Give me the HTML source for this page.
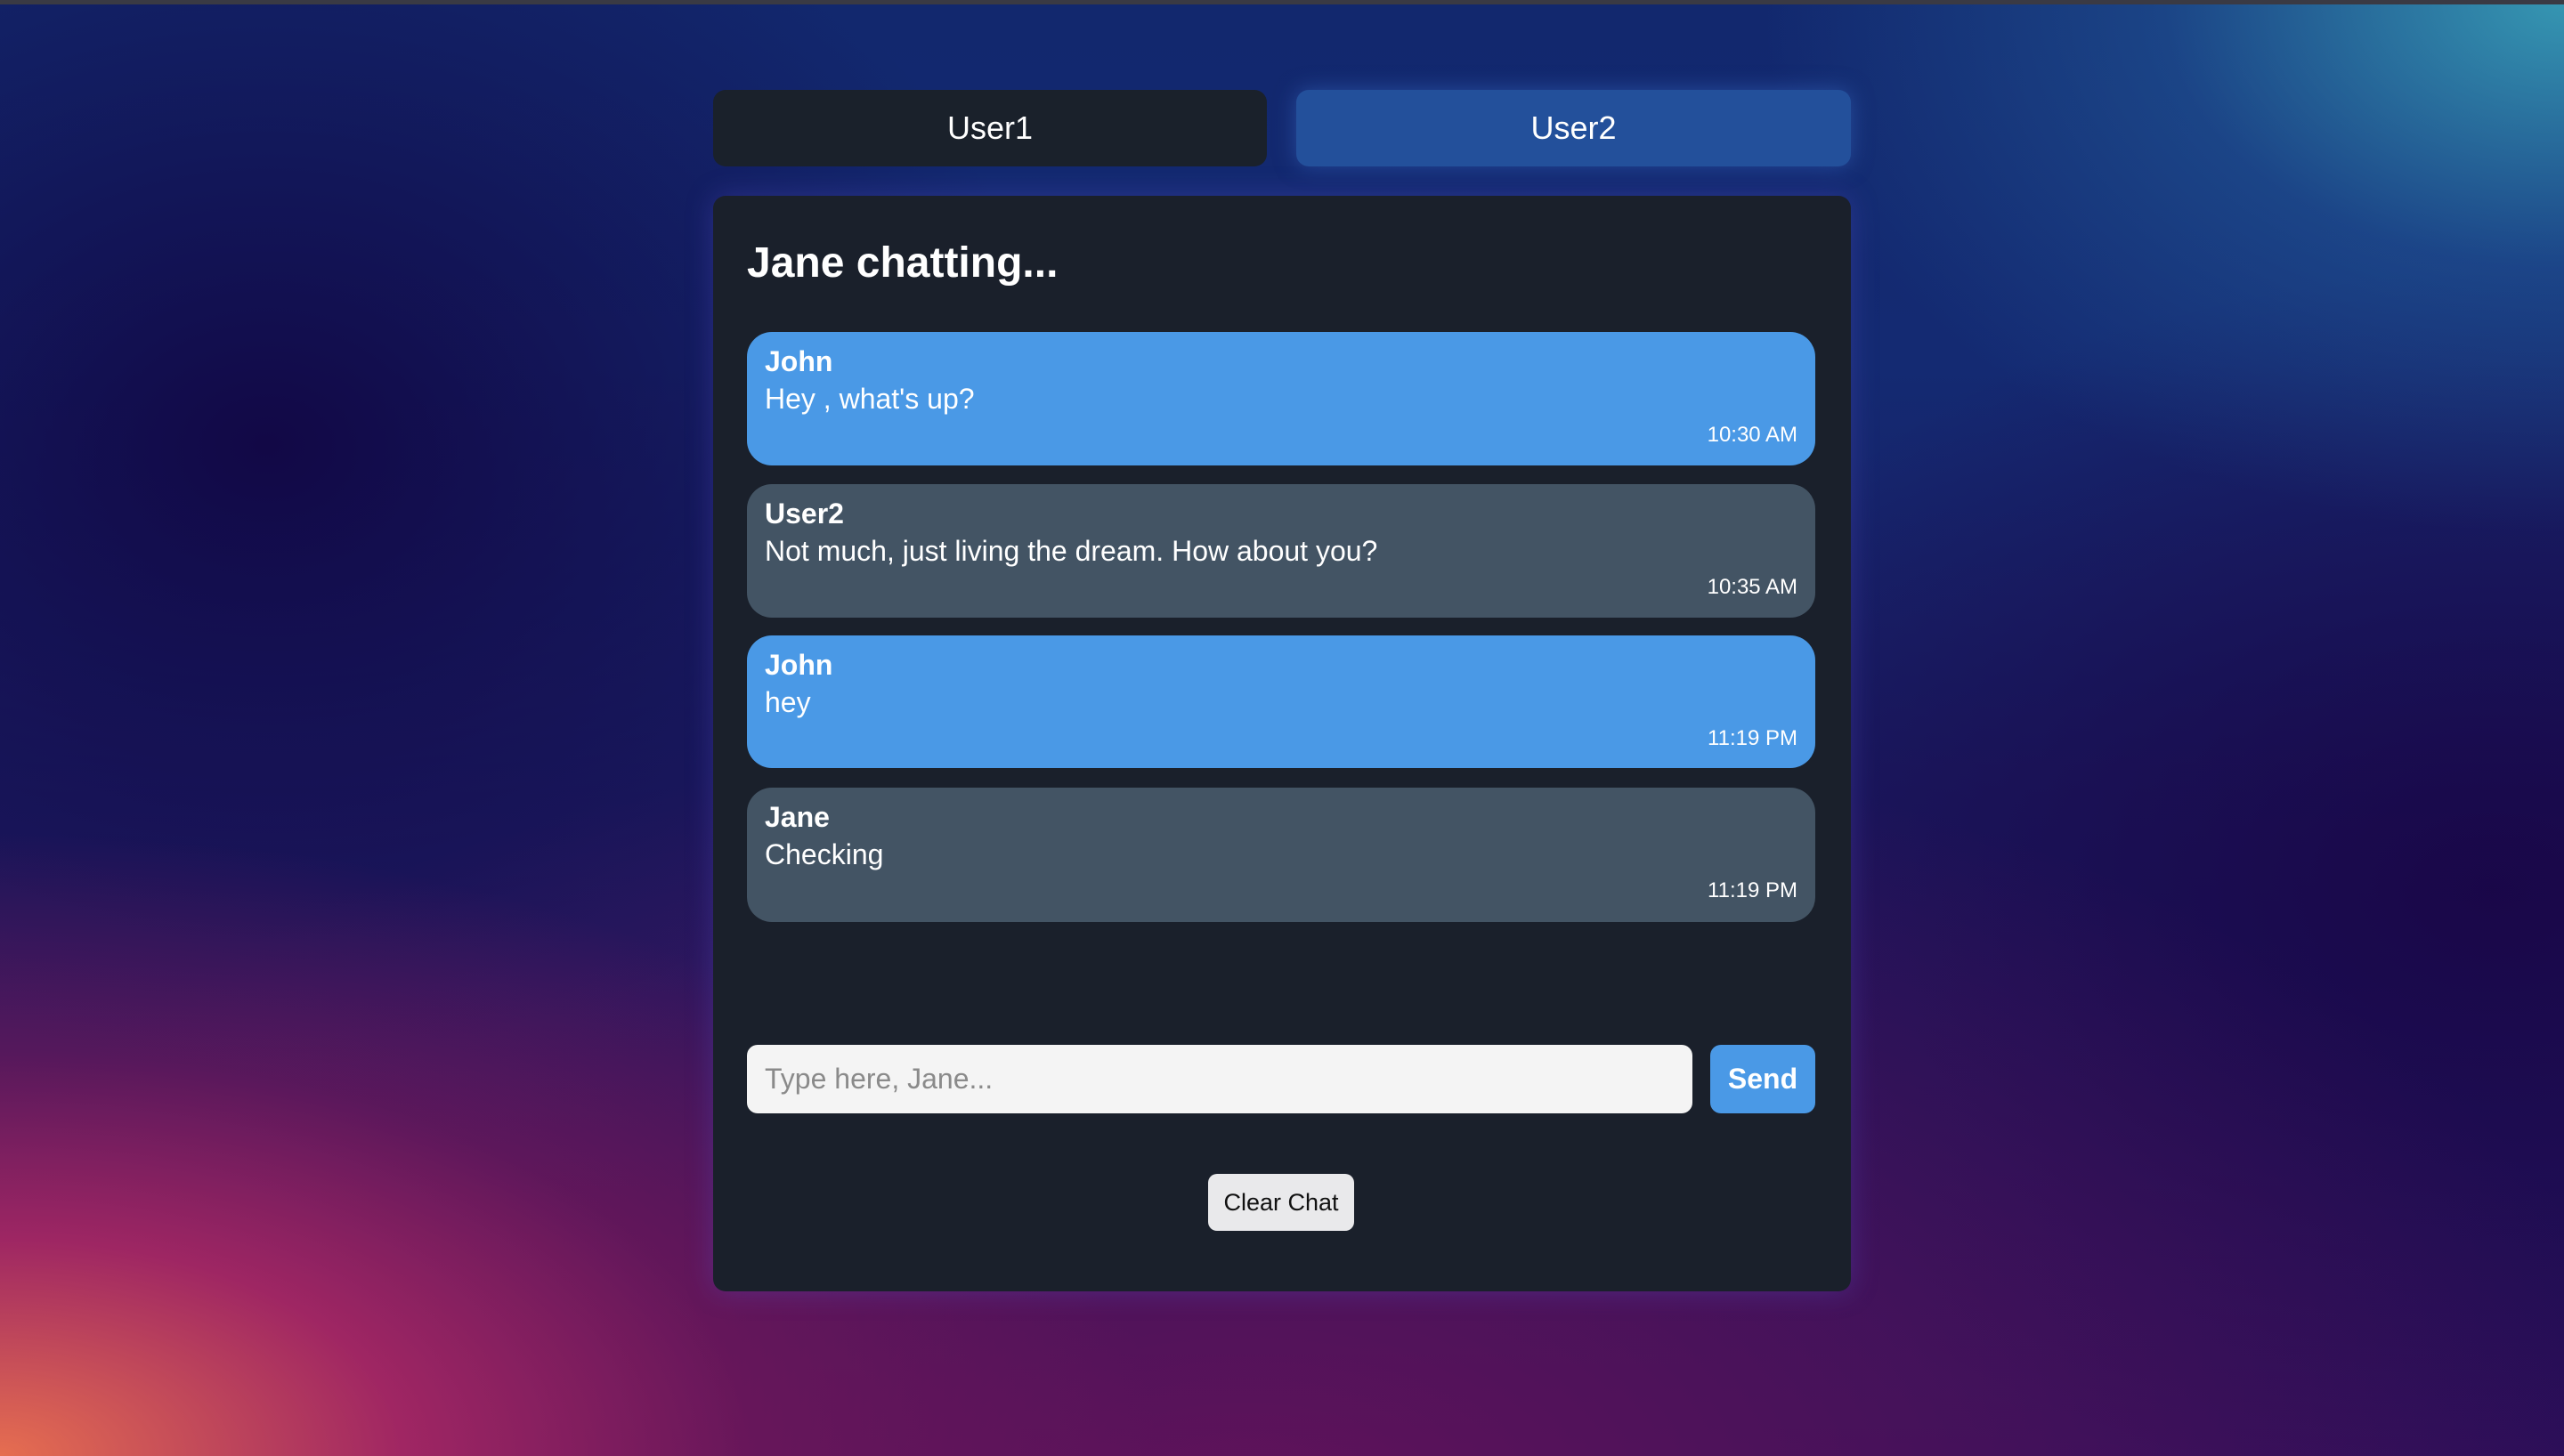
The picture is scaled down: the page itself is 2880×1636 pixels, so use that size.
<!DOCTYPE html>
<html><head><meta charset="utf-8"><style>
*{box-sizing:border-box;margin:0;padding:0}
html,body{width:2880px;height:1636px;overflow:hidden}
body{font-family:"Liberation Sans",Arial,sans-serif;position:relative;
background:
radial-gradient(ellipse 900px 600px at 2880px 0px,rgba(60,170,190,0.85),rgba(40,110,170,0.4) 50%,transparent 100%),
radial-gradient(ellipse 1300px 700px at 0px 1636px,rgba(230,110,80,1),rgba(170,40,100,0.9) 35%,rgba(120,25,90,0.6) 65%,transparent 100%),
radial-gradient(ellipse 1600px 900px at 1400px 1700px,rgba(110,20,90,0.8),transparent 100%),
radial-gradient(ellipse 1000px 700px at 2800px 1000px,rgba(25,5,70,0.9),transparent 100%),
radial-gradient(ellipse 900px 700px at 300px 500px,rgba(18,8,70,1),transparent 100%),
linear-gradient(180deg,#12286e 0%,#142a72 25%,#1a1a60 55%,#2a0f5a 100%);}
.topbar{position:absolute;left:0;top:0;width:2880px;height:5px;background:#3a3a44}
.tab{position:absolute;top:101px;height:86px;width:622px;border-radius:14px;color:#fff;font-size:36px;display:flex;align-items:center;justify-content:center}
.t1{left:801px;background:#1a212b}
.t2{left:1456px;width:623px;background:#23509b;box-shadow:0 0 24px rgba(60,110,200,0.5)}
.panel{position:absolute;left:801px;top:220px;width:1278px;height:1231px;background:#1a202b;border-radius:14px;box-shadow:0 0 30px rgba(90,80,200,0.35)}
h1{position:absolute;left:38px;top:50px;font-size:48px;color:#fff;font-weight:bold;line-height:52px}
.msg{position:absolute;left:38px;width:1200px;height:150px;border-radius:28px;padding:14px 20px 0;color:#fff}
.b{background:#4a99e6}.g{background:#435464}
.n{font-weight:bold;font-size:32px;line-height:38px}
.x{font-size:32px;line-height:46px}
.tm{font-size:24px;line-height:36px;text-align:right}
.inp{position:absolute;left:38px;top:954px;width:1062px;height:77px;background:#f4f4f4;border-radius:12px;color:#8a8a8a;font-size:32px;line-height:77px;padding-left:20px}
.send{position:absolute;left:1120px;top:954px;width:118px;height:77px;background:#4a99e6;border-radius:12px;color:#fff;font-weight:bold;font-size:32px;line-height:77px;text-align:center}
.clr{position:absolute;left:556px;top:1099px;width:164px;height:64px;background:#e9e9eb;border-radius:10px;color:#111;font-size:27px;line-height:64px;text-align:center}
</style></head><body>
<div class="topbar"></div>
<div class="tab t1">User1</div>
<div class="tab t2">User2</div>
<div class="panel">
<h1>Jane chatting...</h1>
<div class="msg b" style="top:153px"><div class="n">John</div><div class="x">Hey , what's up?</div><div class="tm">10:30 AM</div></div>
<div class="msg g" style="top:324px"><div class="n">User2</div><div class="x">Not much, just living the dream. How about you?</div><div class="tm">10:35 AM</div></div>
<div class="msg b" style="top:494px;height:149px"><div class="n">John</div><div class="x">hey</div><div class="tm">11:19 PM</div></div>
<div class="msg g" style="top:665px;height:151px"><div class="n">Jane</div><div class="x">Checking</div><div class="tm">11:19 PM</div></div>
<div class="inp">Type here, Jane...</div>
<div class="send">Send</div>
<div class="clr">Clear Chat</div>
</div>
</body></html>
